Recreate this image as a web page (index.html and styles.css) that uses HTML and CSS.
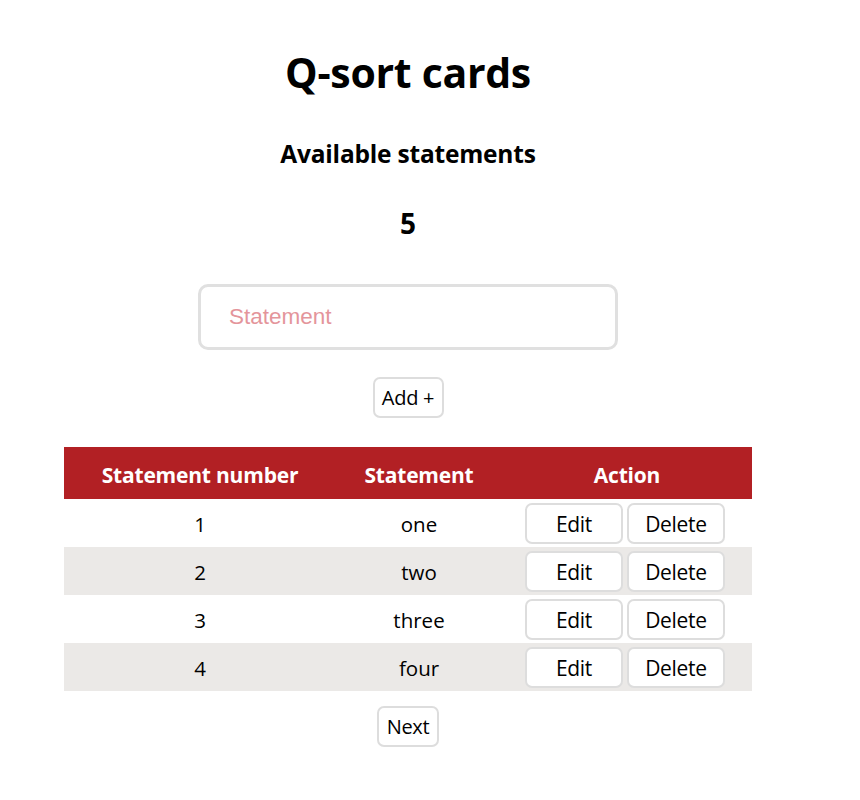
FILE: index.html
```html
<!DOCTYPE html>
<html>
<head>
<meta charset="utf-8">
<link rel="stylesheet" href="styles.css">
</head>
<body>
<main class="page">
  <h1 class="title">Q-sort cards</h1>
  <h2 class="subtitle">Available statements</h2>
  <div class="count">5</div>
  <input class="statement-input" type="text" placeholder="Statement">
  <button class="btn btn-add">Add +</button>
  <table class="cards">
    <thead>
      <tr><th class="c1">Statement number</th><th class="c2">Statement</th><th class="c3">Action</th></tr>
    </thead>
    <tbody>
      <tr><td>1</td><td>one</td><td class="actions"><button class="btn btn-row">Edit</button><button class="btn btn-row">Delete</button></td></tr>
      <tr><td>2</td><td>two</td><td class="actions"><button class="btn btn-row">Edit</button><button class="btn btn-row">Delete</button></td></tr>
      <tr><td>3</td><td>three</td><td class="actions"><button class="btn btn-row">Edit</button><button class="btn btn-row">Delete</button></td></tr>
      <tr><td>4</td><td>four</td><td class="actions"><button class="btn btn-row">Edit</button><button class="btn btn-row">Delete</button></td></tr>
    </tbody>
  </table>
  <button class="btn btn-next">Next</button>
</main>
</body>
</html>
```
FILE: styles.css
```css
html, body {
  margin: 0;
  padding: 0;
  background: #ffffff;
}
body {
  font-family: "Open Sans", "Noto Sans", sans-serif;
  color: #000;
}
.page {
  width: 688px;
  margin-left: 64px;
  display: flex;
  flex-direction: column;
  align-items: center;
  padding-top: 46px;
}
.title {
  margin: 0;
  font-size: 41px;
  font-weight: 700;
  line-height: 52px;
  letter-spacing: -0.3px;
}
.subtitle {
  margin: 41px 0 0;
  font-size: 24.5px;
  font-weight: 700;
  line-height: 30px;
  letter-spacing: -0.2px;
}
.count {
  margin-top: 36px;
  font-size: 28px;
  font-weight: 700;
  line-height: 36px;
}
.statement-input {
  margin-top: 43px;
  width: 420px;
  height: 66px;
  box-sizing: border-box;
  border: 3px solid #e0e0e0;
  border-radius: 10px;
  padding: 0 28px;
  font-family: "Liberation Sans", Arial, sans-serif;
  font-size: 22.5px;
  outline: none;
}
.statement-input::placeholder {
  color: #e4959b;
}
.btn {
  background: #fff;
  border: 2px solid #dddddd;
  border-radius: 7px;
  font-family: "Open Sans", "Noto Sans", sans-serif;
  font-size: 20px;
  color: #000;
  padding: 0;
  box-sizing: border-box;
  height: 41px;
  cursor: pointer;
  letter-spacing: -0.3px;
}
.btn-add {
  margin-top: 27px;
  width: 71px;
}
.cards {
  margin-top: 29px;
  width: 688px;
  border-collapse: collapse;
  font-size: 20.5px;
}
.cards th {
  background: #b22024;
  color: #fff;
  font-weight: 700;
  font-size: 21px;
  height: 52px;
  padding: 3px 0 0;
  box-sizing: border-box;
  letter-spacing: -0.2px;
}
.c1 { width: 272px; }
.c2 { width: 166px; }
.cards td {
  height: 48px;
  padding: 1px 0 0;
  box-sizing: border-box;
  text-align: center;
}
.cards tbody tr:nth-child(even) td {
  background: #ebe9e7;
}
.actions {
  white-space: nowrap;
  padding-right: 4px !important;
}
.btn-row {
  width: 98px;
  height: 41px;
  margin: 0 2px;
  vertical-align: middle;
  font-size: 21px;
}
.btn-next {
  margin-top: 15px;
  width: 62px;
}
```
